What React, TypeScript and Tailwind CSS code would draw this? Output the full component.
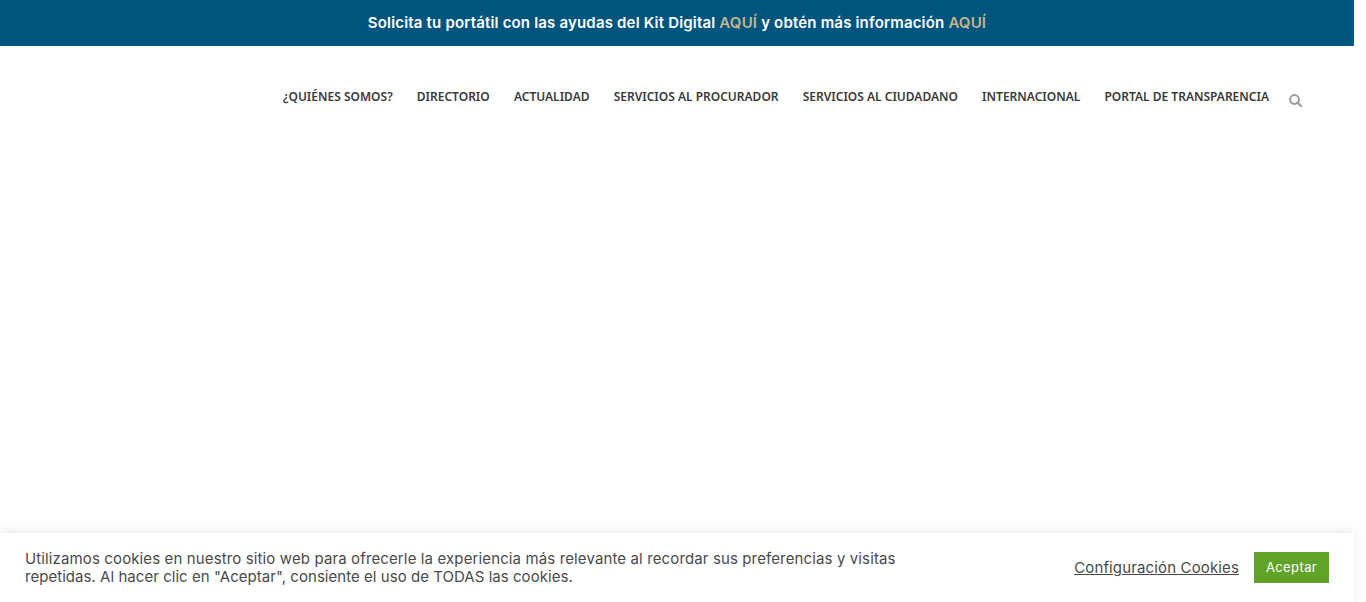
import React from "react";

const links = [
  "¿QUIÉNES SOMOS?",
  "DIRECTORIO",
  "ACTUALIDAD",
  "SERVICIOS AL PROCURADOR",
  "SERVICIOS AL CIUDADANO",
  "INTERNACIONAL",
  "PORTAL DE TRANSPARENCIA",
];

export default function App() {
  return (
    <div className="relative h-[602px] w-[1366px] overflow-hidden bg-white font-['Noto_Sans',sans-serif]">
      <div className="w-[1354px]">
        <div className="flex h-[46px] items-center justify-center bg-[#00557f] font-['Inter',sans-serif] text-[15px] font-semibold tracking-[0.18px] text-white">
          <span>
            Solicita tu portátil con las ayudas del Kit Digital <span className="text-[#c4b68e]">AQUÍ</span> y obtén más información <span className="text-[#c4b68e]">AQUÍ</span>
          </span>
        </div>
        <nav className="flex items-start justify-end pr-[52px] pt-[42px]">
          <ul className="flex gap-[24.15px]">
            {links.map((l) => (
              <li key={l} className="text-[12px] font-semibold leading-[17px] text-[#3a3a3a]">
                {l}
              </li>
            ))}
          </ul>
          <svg className="ml-5 mt-[6px] h-[13px] w-[13px] fill-none stroke-[#999] stroke-[2]" viewBox="0 0 13 13">
            <circle cx="5.5" cy="5.5" r="4.4" />
            <path d="M8.7 8.7 12.2 12.2" strokeLinecap="round" />
          </svg>
        </nav>
      </div>
      <div className="absolute bottom-0 left-0 flex h-[69px] w-[1354px] items-center bg-white pl-[25px] pr-[25px] font-['Inter',sans-serif] text-[#4a4a4a] shadow-[0_-1px_10px_rgba(172,171,171,0.3)]">
        <p className="w-[900px] text-[15px] leading-[18px]">
          <span className="block tracking-[0.125px]">Utilizamos cookies en nuestro sitio web para ofrecerle la experiencia más relevante al recordar sus preferencias y visitas</span>
          <span className="block tracking-[0.04px]">repetidas. Al hacer clic en "Aceptar", consiente el uso de TODAS las cookies.</span>
        </p>
        <a className="ml-auto translate-y-[1px] text-[15px] tracking-[0.14px] text-[#4a4a4a] underline">Configuración Cookies</a>
        <button className="ml-[15px] flex h-[31px] w-[75px] items-center justify-center bg-[#61a229] text-[13px] tracking-[0.4px] text-white">Aceptar</button>
      </div>
    </div>
  );
}
